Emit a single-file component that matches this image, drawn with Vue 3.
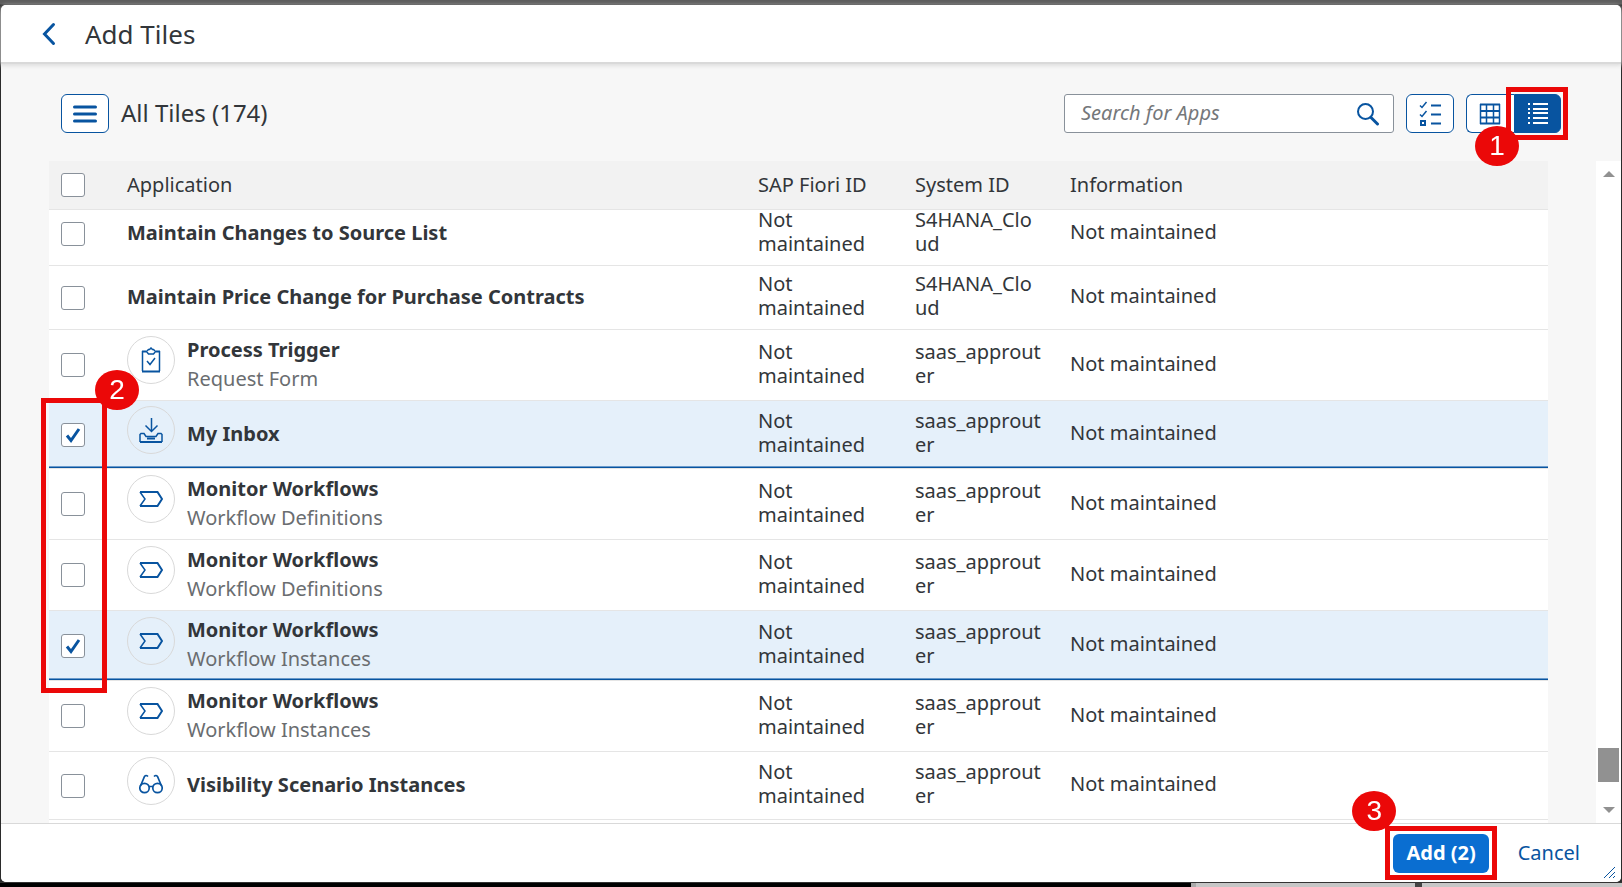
<script setup>
import { ref, computed, onMounted } from 'vue'

const rows = ref([
  { title: 'Maintain Changes to Source List', system: 'S4HANA_Cloud' },
  { title: 'Maintain Price Change for Purchase Contracts', system: 'S4HANA_Cloud' },
  { title: 'Process Trigger', subtitle: 'Request Form', icon: 'task', system: 'saas_approuter' },
  { title: 'My Inbox', icon: 'inbox', system: 'saas_approuter', selected: true },
  { title: 'Monitor Workflows', subtitle: 'Workflow Definitions', icon: 'process', system: 'saas_approuter' },
  { title: 'Monitor Workflows', subtitle: 'Workflow Definitions', icon: 'process', system: 'saas_approuter' },
  { title: 'Monitor Workflows', subtitle: 'Workflow Instances', icon: 'process', system: 'saas_approuter', selected: true },
  { title: 'Monitor Workflows', subtitle: 'Workflow Instances', icon: 'process', system: 'saas_approuter' },
  { title: 'Visibility Scenario Instances', icon: 'glasses', system: 'saas_approuter' }
])

const count = computed(() => rows.value.filter((r) => r.selected).length)
const search = ref('')
const scroller = ref(null)

onMounted(() => {
  scroller.value.scrollTop = 8
})
</script>

<template>
  <div class="page">
    <section class="dialog" role="dialog" aria-labelledby="dialog-title">
      <header class="header">
        <button class="back" aria-label="Back">
          <svg width="14" height="24" viewBox="0 0 14 24"><path d="M11.500 2.500 2.500 12l9 9.500" /></svg>
        </button>
        <h1 id="dialog-title">Add Tiles</h1>
      </header>

      <main class="body">
        <div class="toolbar">
          <button class="tool" aria-label="Categories">
            <svg width="24" height="18" viewBox="0 0 24 18"><path class="bars" d="M1.500 2h21M1.500 9h21M1.500 16h21" /></svg>
          </button>
          <h2>All Tiles (174)</h2>
          <div class="search">
            <input v-model="search" type="text" placeholder="Search for Apps" aria-label="Search for Apps" />
            <button aria-label="Search">
              <svg width="24" height="24" viewBox="0 0 24 24">
                <circle cx="9.500" cy="9.500" r="7.500" class="thin" />
                <path class="handle" d="m15 15.500 6.500 6.500" />
              </svg>
            </button>
          </div>
          <button class="tool" aria-label="Select multiple">
            <svg width="22" height="26" viewBox="0 0 22 26">
              <path class="hair" d="m1 4.500 2 2L7.500 1M1 13.500l2 2L7.500 10" />
              <path class="mid" d="M2 20h4v4H2zM12 4.500h10M12 13.500h10M12 22.500h10" />
            </svg>
          </button>
          <div class="segmented">
            <button class="tool grid-view" aria-label="Grid view">
              <svg width="22" height="22" viewBox="0 0 22 22">
                <path class="hair" d="M1.500 1v20M7.500 1v20M14.500 1v20M20.500 1v20" />
                <path class="mid" d="M1 1.500h20M1 8h20M1 14.500h20M1 20.500h20" />
              </svg>
            </button>
            <button class="tool list-view" aria-label="List view">
              <svg width="20" height="21" viewBox="0 0 20 21">
                <path d="M5 1h15M5 6h15M5 10h15M5 15h15M5 20h15M0 1h2M0 6h2M0 10h2M0 15h2M0 20h2" />
              </svg>
            </button>
            <span class="frame frame-view"></span>
            <span class="badge badge-view">1</span>
          </div>
        </div>

        <div class="list">
          <div ref="scroller" class="scroller">
            <table>
              <colgroup>
                <col class="c-check" /><col /><col class="c-fiori" /><col class="c-system" /><col class="c-info" />
              </colgroup>
              <thead>
                <tr>
                  <th><label class="check"><input type="checkbox" aria-label="Select all" /></label></th>
                  <th>Application</th>
                  <th>SAP Fiori ID</th>
                  <th>System ID</th>
                  <th>Information</th>
                </tr>
              </thead>
              <tbody>
                <tr
                  v-for="(row, i) in rows"
                  :key="i"
                  :class="{ selected: row.selected, iconic: row.icon, double: row.subtitle }"
                >
                  <td>
                    <label class="check">
                      <input v-model="row.selected" type="checkbox" :aria-label="row.title" />
                      <svg v-if="row.selected" width="16" height="16" viewBox="0 0 16 16"><path d="m2 8.500 4 5L14 2" /></svg>
                    </label>
                  </td>
                  <td>
                    <div class="app">
                      <span v-if="row.icon" class="avatar">
                        <svg v-if="row.icon === 'task'" width="20" height="26" viewBox="0 0 20 26">
                          <path class="hair" d="M1.500 4v20M18.500 4v20M5.500 4.500l2-2h1l1.500-1.500 1.500 1.500h1l2 2-2 2.500h-5zM6 14l3 3.500 5-6.500" />
                          <path class="mid" d="M1 4.500h4M15 4.500h4M1 24.500h18" />
                        </svg>
                        <svg v-else-if="row.icon === 'inbox'" class="inbox" width="24" height="26" viewBox="0 0 24 26">
                          <path class="hair" d="M12.500 0v13M6.500 7.500l6 6 6-6" />
                          <path class="hair" d="M1 24v-7.500L2 15.500h3l2 3h10l2-3h3l1 1V24" />
                          <path class="mid" d="M1 24h22M8 20.500h8" />
                        </svg>
                        <svg v-else-if="row.icon === 'process'" width="24" height="16" viewBox="0 0 24 16">
                          <path class="mid" d="M1 1h17.500L23 8l-4.500 7H1" />
                          <path class="hair" d="m1 1 5 7-5 7" />
                        </svg>
                        <svg v-else class="glasses" width="24" height="20" viewBox="0 0 24 20">
                          <circle cx="5.500" cy="14" r="4.700" /><circle cx="18.500" cy="14" r="4.700" />
                          <path d="M10 12.500h4M1.500 12 5.500 2.500Q7 .5 9 2.500M22.500 12l-4-9.500Q17 .5 15 2.500" />
                        </svg>
                      </span>
                      <span class="names">
                        <b>{{ row.title }}</b>
                        <span v-if="row.subtitle">{{ row.subtitle }}</span>
                      </span>
                    </div>
                  </td>
                  <td class="text">Not maintained</td>
                  <td class="text system">{{ row.system }}</td>
                  <td class="text">Not maintained</td>
                </tr>
              </tbody>
            </table>
          </div>
          <div class="scrollbar">
            <span class="arrow up"></span>
            <span class="thumb"></span>
            <span class="arrow down"></span>
          </div>
          <span class="frame frame-checks"></span>
          <span class="badge badge-checks">2</span>
        </div>
      </main>

      <footer class="footer">
        <div class="add-wrap">
          <button class="add">Add ({{ count }})</button>
          <span class="frame frame-add"></span>
          <span class="badge badge-add">3</span>
        </div>
        <button class="cancel">Cancel</button>
        <svg class="grip" width="13" height="13" viewBox="0 0 13 13"><path d="M1 12 12 1M6 12l6-6M10 12l2-2" /></svg>
      </footer>
    </section>
    <div class="below"><span class="dark"></span><span class="light"></span><span class="mark"></span><span class="rest"></span></div>
  </div>
</template>

<style>
body {
  margin: 0;
}
</style>

<style scoped>
.page,
.page * {
  box-sizing: border-box;
}
.page {
  height: 100vh;
  display: flex;
  flex-direction: column;
  padding-top: 5px;
  background: linear-gradient(#5c5c5c 4px, #2b2b2b 5px);
  color: #32363a;
  font: 20px/24px "Noto Sans", sans-serif;
  overflow: hidden;
}
button,
input {
  font: inherit;
  margin: 0;
}
button {
  cursor: pointer;
}
svg {
  display: block;
  fill: none;
  stroke: #0854a0;
  stroke-width: 2;
}
.hair { stroke-width: 1.500; }
.mid { stroke-width: 2; }
.thin { stroke-width: 2; }
.bars { stroke-width: 3; stroke-linecap: round; }
.handle { stroke-width: 3; stroke-linecap: round; }

.dialog {
  flex: 1;
  min-height: 0;
  margin: 0 1px;
  display: flex;
  flex-direction: column;
  background: #f7f7f7;
  border-radius: 5px;
}
.header {
  position: relative;
  z-index: 1;
  height: 57px;
  display: flex;
  align-items: center;
  gap: 24px;
  padding-left: 36px;
  background: #fff;
  border-radius: 5px 5px 0 0;
  box-shadow: 0 2px 0 #d9d9d9, 0 2px 5px 1px #d5d5d5;
}
.back {
  display: grid;
  place-items: center;
  width: 24px;
  height: 36px;
  padding: 0;
  border: 0;
  background: none;
}
.back svg {
  stroke-width: 3;
  stroke-linecap: round;
}
h1,
h2 {
  margin: 0;
  font-size: 24px;
  line-height: 32px;
  font-weight: 400;
}
h1 {
  font-size: 26px;
}
h2 {
  padding-bottom: 2px;
}
.body {
  flex: 1;
  min-height: 0;
  display: flex;
  flex-direction: column;
}
.toolbar {
  display: flex;
  align-items: center;
  gap: 12px;
  padding: 32px 60px 28px;
}
.tool {
  display: grid;
  place-items: center;
  width: 48px;
  height: 39px;
  padding: 0;
  border: 1px solid #0854a0;
  border-radius: 6px;
  background: #fff;
}
.search {
  display: flex;
  width: 330px;
  height: 39px;
  margin-left: auto;
  border: 1px solid #89919a;
  border-radius: 3px;
  background: #fff;
}
.search input {
  flex: 1;
  min-width: 0;
  padding: 0 0 2px 16px;
  border: 0;
  outline: 0;
  background: none;
  color: #32363a;
  font-style: italic;
}
.search input::placeholder {
  color: #74777a;
  opacity: 1;
}
.search button {
  display: grid;
  place-items: center;
  width: 50px;
  padding: 0;
  border: 0;
  background: none;
}
.segmented {
  position: relative;
  display: flex;
}
.grid-view {
  border-radius: 6px 0 0 6px;
  border-right: 0;
  padding-right: 2px;
}
.list-view {
  width: 47px;
  border-radius: 0 6px 6px 0;
  background: #0854a0;
}
.list-view svg {
  stroke: #fff;
}

.list {
  position: relative;
  flex: 1;
  min-height: 0;
  display: flex;
  padding-left: 48px;
}
.scroller {
  flex: 1;
  overflow: hidden;
  margin-right: 48px;
  padding-bottom: 4px;
  background: #fff;
}
table {
  width: 100%;
  table-layout: fixed;
  border-collapse: separate;
  border-spacing: 0;
}
.c-check { width: 66px; }
.c-fiori { width: 157px; }
.c-system { width: 155px; }
.c-info { width: 490px; }
th,
td {
  padding: 0 12px;
  text-align: left;
  font-weight: 400;
  vertical-align: middle;
  border-bottom: 1px solid #e5e5e5;
}
th {
  position: sticky;
  top: 0;
  z-index: 1;
  height: 49px;
  background: #f2f2f2;
}
td {
  height: 64px;
}
.text {
  padding-bottom: 3px;
}
.iconic td {
  height: 68px;
}
.double td {
  height: 71px;
}
.double.selected td {
  height: 70px;
}
.system {
  padding-right: 16px;
  word-break: break-all;
}
.selected td {
  background: #e5f0fa;
  box-shadow: inset 0 -1px #0854a0, inset 0 -2px #6b9bcb;
}
.check {
  position: relative;
  display: grid;
  place-items: center;
  width: 24px;
  height: 24px;
}
.check input {
  grid-area: 1 / 1;
  appearance: none;
  width: 24px;
  height: 24px;
  border: 1px solid #89919a;
  border-radius: 3px;
  background: #fff;
}
.check svg {
  grid-area: 1 / 1;
  z-index: 0;
  pointer-events: none;
  stroke-width: 3;
}
.app {
  display: flex;
  align-items: center;
  gap: 12px;
}
.iconic .app {
  height: 58px;
}
.avatar {
  align-self: flex-start;
  display: grid;
  place-items: center;
  width: 48px;
  height: 48px;
  border: 1px solid #d9d9d9;
  border-radius: 50%;
}
.inbox {
  margin-top: 3px;
}
.glasses {
  stroke-width: 1.700;
  margin-top: 6px;
}
.names {
  display: flex;
  flex-direction: column;
  margin-bottom: 3px;
  line-height: 29px;
  color: #6a6d70;
}
b {
  font-weight: 700;
  color: #32363a;
}
.scrollbar {
  width: 25px;
  display: flex;
  flex-direction: column;
  align-items: center;
  padding: 10px 2px;
  background: #fff;
}
.arrow {
  border: 6px solid transparent;
}
.up {
  border-top: 0;
  border-bottom-color: #919191;
}
.down {
  border-bottom: 0;
  border-top-color: #919191;
}
.thumb {
  width: 21px;
  height: 34px;
  margin: auto 0 25px;
  background: #919191;
}

.footer {
  position: relative;
  display: flex;
  justify-content: flex-end;
  gap: 16px;
  padding: 10px 28px 9px;
  border-top: 1px solid #d9d9d9;
  border-radius: 0 0 5px 5px;
  background: #fff;
}
.add-wrap {
  position: relative;
}
.add,
.cancel {
  height: 39px;
  padding: 0 13px 2px;
  border: 0;
  border-radius: 6px;
  background: none;
  color: #0854a0;
}
.add {
  background: #0a6ed1;
  color: #fff;
  font-weight: 700;
}
.grip {
  position: absolute;
  right: 5px;
  bottom: 3px;
  stroke-width: 1;
}

.frame {
  position: absolute;
  border: 5px solid #eb0808;
  pointer-events: none;
}
.badge {
  position: absolute;
  display: grid;
  place-items: center;
  width: 44px;
  height: 40px;
  border-radius: 50%;
  background: #eb0808;
  color: #fff;
  font: 28px/32px "Liberation Sans", Arial, sans-serif;
  pointer-events: none;
}
.frame-view { top: -7px; bottom: -7px; right: -7px; width: 62px; }
.badge-view { top: 32px; left: 9px; z-index: 2; }
.frame-checks { z-index: 2; top: 237px; left: 40px; width: 66px; height: 295px; }
.badge-checks { z-index: 2; top: 209px; left: 94px; }
.frame-add { top: -8px; bottom: -7px; left: -8px; right: -8px; }
.badge-add { z-index: 2; top: -43px; left: -41px; }

.below {
  height: 5px;
  display: flex;
  border-top: 1px solid #333;
  background: #c6c6c6;
}
.below span { height: 4px; }
.dark { flex: 1198; background: #000; }
.light { flex: 220; border-left: 5px solid #aaa; }
.mark { flex: 7; background: #444; }
.rest { flex: 201; }
</style>
